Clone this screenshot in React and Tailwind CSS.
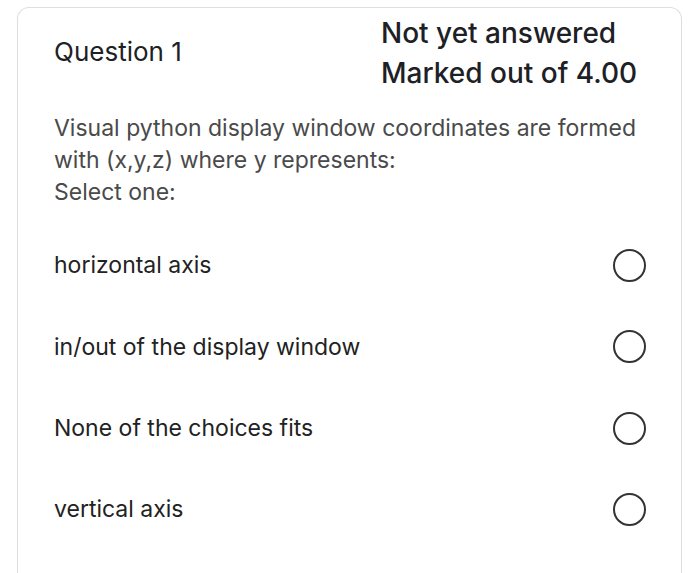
import React from 'react';

const options = [
    'horizontal axis',
    'in/out of the display window',
    'None of the choices fits',
    'vertical axis',
];

const Radio = () => (
    <span className="block w-[33px] h-[33px] rounded-full border-2 border-[#333]" />
);

const App = () => {
    return (
        <div className="bg-white min-h-[573px] h-[573px] overflow-hidden pt-[7px] pl-[17px] pr-[18px]" style={{ fontFamily: 'Inter, "Liberation Sans", sans-serif' }}>
            <div className="border border-[#dedede] border-b-0 rounded-t-[12px] h-[600px] pl-[36px] pr-[46px]">
                <div className="flex items-start justify-between pt-[5px]">
                    <h2 className="text-[26px] leading-[32px] text-[#1d2125] mt-[23px]">Question 1</h2>
                    <div className="text-[28px] leading-[40px] font-medium text-[#1d2125] w-[254px] whitespace-nowrap">
                        <div>Not yet answered</div>
                        <div>Marked out of 4.00</div>
                    </div>
                </div>
                <div className="mt-[19px] text-[23px] leading-[32px] text-[#4a4a4a] whitespace-nowrap">
                    <p>Visual python display window coordinates are formed<br />with (x,y,z) where y represents:</p>
                    <p>Select one:</p>
                </div>
                <ul className="mt-[17px]">
                    {options.map(o => (
                        <li key={o} className="h-[81.3px] flex items-center justify-between -mr-[11px]">
                            <span className="text-[23px] text-[#222]">{o}</span>
                            <Radio />
                        </li>
                    ))}
                </ul>
            </div>
        </div>
    );
};

export default App;
